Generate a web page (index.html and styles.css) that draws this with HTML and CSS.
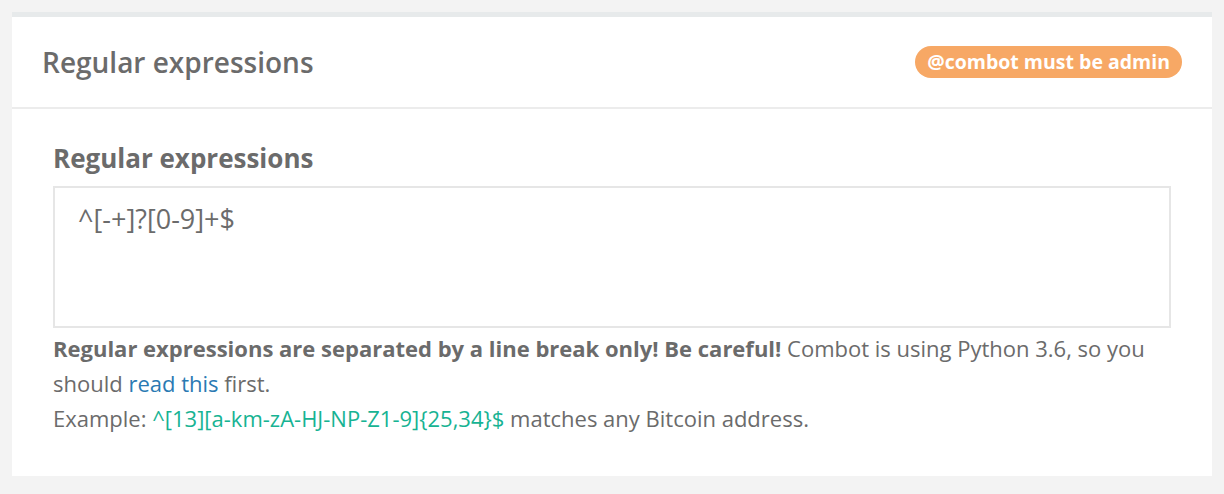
FILE: index.html
```html
<!DOCTYPE html>
<html lang="en">
<head>
    <meta charset="UTF-8">
    <meta name="viewport" content="width=device-width, initial-scale=1.0">
    <title>Regular expressions</title>
    <link rel="stylesheet" href="styles.css">
</head>
<body>
    <div class="panel">
        <div class="panel-heading">
            <h3 class="panel-title">Regular expressions</h3>
            <span class="badge-warning">@combot must be admin</span>
        </div>
        <div class="panel-body">
            <label class="field-label" for="regexps">Regular expressions</label>
            <textarea id="regexps" class="field-input">^[-+]?[0-9]+$</textarea>
            <p class="help">
                <b>Regular expressions are separated by a line break only! Be careful!</b>
                Combot is using Python 3.6, so you should <a href="#">read this</a> first.
            </p>
            <p class="help">
                Example: <code>^[13][a-km-zA-HJ-NP-Z1-9]{25,34}$</code> matches any Bitcoin address.
            </p>
        </div>
    </div>
</body>
</html>
```

FILE: styles.css
```css
body {
    margin: 0;
    padding: 12px;
    background-color: #f3f3f3;
    font-family: "Open Sans", Arial, sans-serif;
    color: #6b6b6b;
}
.panel {
    background-color: #fff;
    border-top: 5px solid #e7eaeb;
    min-height: 464px;
    box-sizing: border-box;
}
.panel-heading {
    display: flex;
    align-items: center;
    justify-content: space-between;
    height: 90px;
    padding: 0 30px 0 30px;
    border-bottom: 2px solid #ececec;
}
.panel-title {
    margin: 0;
    font-size: 28px;
    font-weight: 600;
    color: #6b6b6b;
}
.badge-warning {
    background-color: #f7a865;
    color: #fff;
    font-size: 19.5px;
    font-weight: 700;
    padding: 2px 12px 3px;
    border-radius: 16px;
}
.panel-body {
    padding: 31px 41px 30px;
}
.field-label {
    display: block;
    font-size: 26px;
    font-weight: 700;
    margin-bottom: 10px;
}
.field-input {
    display: block;
    width: 100%;
    height: 142px;
    box-sizing: border-box;
    border: 2px solid #e6e6e6;
    padding: 12px 23px;
    font-family: "Open Sans", Arial, sans-serif;
    font-size: 27px;
    color: #6b6b6b;
    resize: none;
    outline: none;
}
.help {
    margin: 0;
    font-size: 22px;
    line-height: 35px;
}
.help:first-of-type {
    margin-top: 3px;
}
.help a {
    color: #2a7ab3;
    text-decoration: none;
}
.help code {
    font-family: "Open Sans", Arial, sans-serif;
    color: #17b393;
}
```
